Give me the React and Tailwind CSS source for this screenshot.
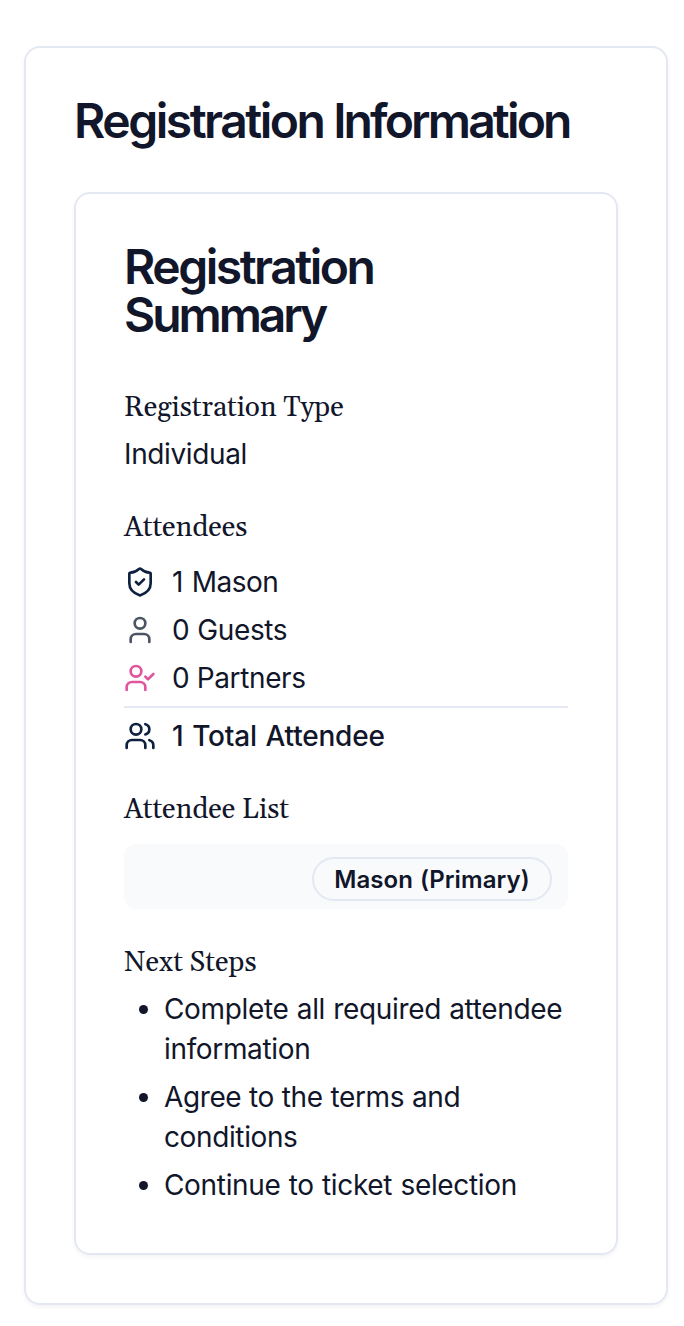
import { ShieldCheck, User, UserCheck, Users } from "lucide-react";

const rows = [
  { Icon: ShieldCheck, color: "text-[#0f2140]", label: "1 Mason", spacing: "tracking-[-0.5px] [word-spacing:1.5px]" },
  { Icon: User, color: "text-[#4b5563]", label: "0 Guests", spacing: "[word-spacing:0.5px]" },
  { Icon: UserCheck, color: "text-[#e0559c]", label: "0 Partners", spacing: "[word-spacing:0px]" },
];

function Heading({ children }) {
  return (
    <h3 className="h-10 whitespace-nowrap pt-0.5 font-['Georgia','Gelasio','DejaVu_Serif','Liberation_Serif',serif] text-[28px] leading-[40px] tracking-normal [word-spacing:0px]">
      {children}
    </h3>
  );
}

export default function App() {
  return (
    <main className="h-[1326px] w-[684px] bg-white px-6 pt-[46px] font-['Inter',sans-serif] text-[28px] leading-[40px] tracking-[-0.38px] text-[#11162a] [word-spacing:0.7px]">
      <section className="h-[1259px] w-[644px] rounded-2xl border-2 border-[#e3e8f2] px-12 pt-[49px] shadow-[0_2px_4px_rgba(0,0,0,0.05)]">
        <h1 className="whitespace-nowrap text-[48px] font-semibold leading-[48px] [word-spacing:0px]">
          <span className="tracking-[-2.48px]">Registration </span>
          <span className="tracking-[-2.85px]">Information</span>
        </h1>
        <section className="mt-[47px] h-[1063px] w-[544px] rounded-2xl border-2 border-[#e3e8f2] px-12 pt-[49px] shadow-[0_2px_4px_rgba(0,0,0,0.05)]">
          <h2 className="flex flex-col text-[48px] font-semibold leading-[48px]">
            <span className="tracking-[-2.48px]">Registration</span>
            <span className="tracking-[-3.05px]">Summary</span>
          </h2>
          <div className="mt-[47px]">
            <Heading>Registration Type</Heading>
            <p className="mt-2">Individual</p>
          </div>
          <div className="mt-8">
            <Heading>Attendees</Heading>
            <div className="mt-4 flex flex-col gap-2">
              {rows.map(({ Icon, color, label, spacing }) => (
                <div key={label} className="flex items-center gap-4">
                  <Icon className={color} size={32} />
                  <span className={spacing}>{label}</span>
                </div>
              ))}
            </div>
            <div className="mt-2 flex items-center gap-4 border-t-2 border-[#e3e8f2] pt-2 font-[550]">
              <Users className="text-[#0f2140]" size={32} />
              <span className="tracking-[-0.2px] [word-spacing:1.5px]">1 Total Attendee</span>
            </div>
          </div>
          <div className="mt-8">
            <Heading>Attendee List</Heading>
            <div className="mt-4 flex h-[65px] items-start justify-end rounded-xl bg-[#f9fafc] pr-4 pt-[13px]">
              <span className="flex h-11 w-60 items-center justify-center whitespace-nowrap rounded-full border-2 border-[#e3e8f2] pt-0.5 text-[24px] font-semibold tracking-[0.08px]">Mason (Primary)</span>
            </div>
          </div>
          <div className="mt-8">
            <Heading>Next Steps</Heading>
            <ul className="mt-2 flex list-disc flex-col gap-2 whitespace-nowrap pl-10">
              <li className="tracking-[-0.34px]">Complete all required attendee<br />information</li>
              <li className="[word-spacing:0.3px]">Agree to the terms and<br />conditions</li>
              <li className="tracking-[-0.33px]">Continue to ticket selection</li>
            </ul>
          </div>
        </section>
      </section>
    </main>
  );
}
